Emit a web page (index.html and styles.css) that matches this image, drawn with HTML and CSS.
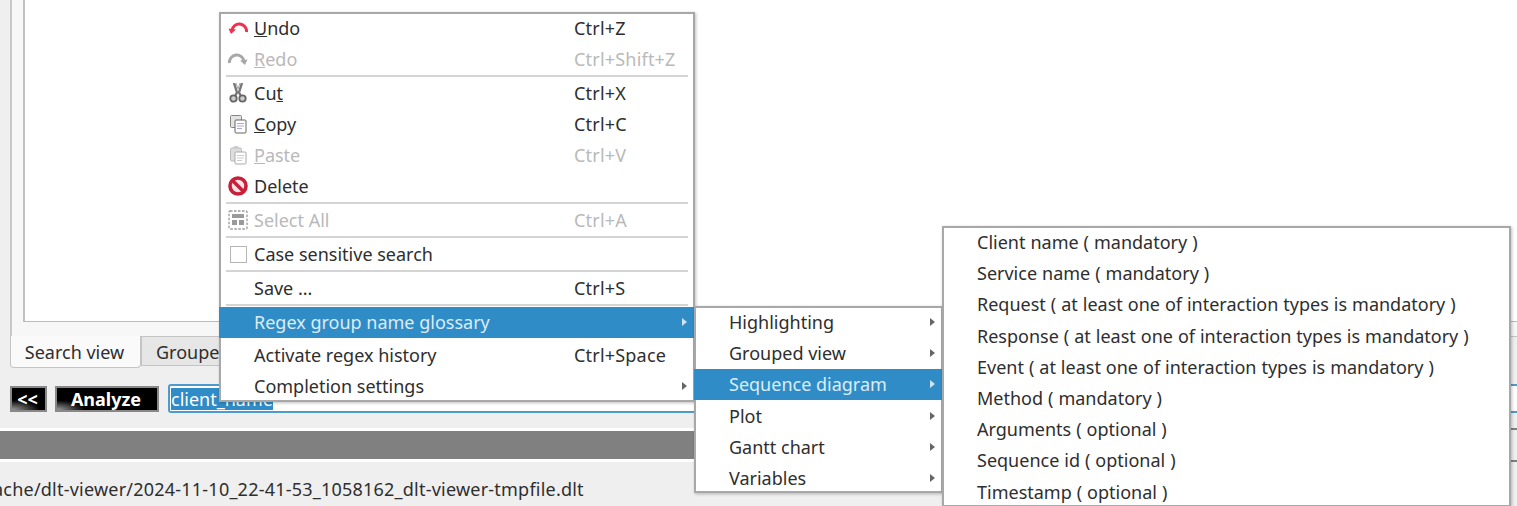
FILE: index.html
```html
<!DOCTYPE html>
<html lang="en">
<head>
    <meta charset="UTF-8">
    <title>DLT Viewer search</title>
    <link rel="stylesheet" href="styles.css">
</head>
<body>

<div class="app">
    <div class="pane">
        <div class="results"></div>
    </div>

    <div class="tabs">
        <div class="tab tab-active">Search view</div>
        <div class="tab">Grouped view</div>
    </div>

    <div class="search-row">
        <button class="btn btn-small">&lt;&lt;</button>
        <button class="btn btn-wide">Analyze</button>
        <div class="search-input"><span class="selected">client_name</span></div>
    </div>

    <div class="progress">
        <div class="progress-chunk"></div>
        <div class="progress-rest"></div>
    </div>

    <div class="status">ache/dlt-viewer/2024-11-10_22-41-53_1058162_dlt-viewer-tmpfile.dlt</div>
</div>

<div class="menu menu-main">
    <div class="item">
        <svg class="icon" viewBox="0 0 20 20"><path d="M4 12.500A7 7 0 0 1 18.500 14" fill="none" stroke="#f0304f" stroke-width="3"/><path d="M0.500 10.500L8 11.500L3 16Z" fill="#f0304f"/></svg>
        <span class="label"><u>U</u>ndo</span><span class="key">Ctrl+Z</span>
    </div>
    <div class="item disabled">
        <svg class="icon" viewBox="0 0 20 20"><path d="M1.500 14A7 7 0 0 1 16 12.500" fill="none" stroke="#a8a8a8" stroke-width="3"/><path d="M19.500 10.500L12 11.500L17 16Z" fill="#a8a8a8"/></svg>
        <span class="label"><u>R</u>edo</span><span class="key">Ctrl+Shift+Z</span>
    </div>
    <div class="sep"></div>
    <div class="item">
        <svg class="icon" viewBox="0 0 20 20"><path d="M6 0L9 9.500L7 13M14 0L11 9.500L13 13" fill="none" stroke="#777" stroke-width="2.400"/><path d="M8 0L10 6L12 0" fill="none" stroke="#aaa"/><circle cx="5.500" cy="15.500" r="3.200" fill="#ccc" stroke="#666" stroke-width="1.800"/><circle cx="14.500" cy="15.500" r="3.200" fill="#ccc" stroke="#666" stroke-width="1.800"/></svg>
        <span class="label">Cu<u>t</u></span><span class="key">Ctrl+X</span>
    </div>
    <div class="item">
        <svg class="icon" viewBox="0 0 20 20"><rect x="2.500" y="1.500" width="11" height="12" rx="1" fill="#e4e4e4" stroke="#888"/><rect x="7" y="6" width="11" height="13" rx="1" fill="#fff" stroke="#666"/><path d="M9 9.500H16M9 12H16M9 14.500H14" stroke="#a9a6e0"/></svg>
        <span class="label"><u>C</u>opy</span><span class="key">Ctrl+C</span>
    </div>
    <div class="item disabled">
        <svg class="icon" viewBox="0 0 20 20"><rect x="2.500" y="3" width="11" height="13" rx="1.500" fill="#ddd" stroke="#bbb"/><rect x="5.500" y="1" width="5" height="3" rx="1" fill="#ccc"/><rect x="7" y="7" width="11" height="12" rx="1" fill="#fff" stroke="#aaa"/><path d="M9 10.500H16M9 13H16M9 15.500H14" stroke="#ccc"/></svg>
        <span class="label"><u>P</u>aste</span><span class="key">Ctrl+V</span>
    </div>
    <div class="item">
        <svg class="icon" viewBox="0 0 20 20"><circle cx="10" cy="10" r="8" fill="#f6e4e6" stroke="#c8203a" stroke-width="3.600"/><path d="M4.500 4.500L15.500 15.500" stroke="#c8203a" stroke-width="3.400"/></svg>
        <span class="label">Delete</span>
    </div>
    <div class="sep"></div>
    <div class="item disabled">
        <svg class="icon" viewBox="0 0 20 20"><rect x="1" y="1" width="18" height="18" rx="1" fill="none" stroke="#999" stroke-width="1.300" stroke-dasharray="2.500 1.500"/><rect x="4" y="4" width="12" height="4" fill="#9a9a9a"/><rect x="4" y="10" width="5" height="5" fill="#9a9a9a"/><rect x="11" y="10" width="5" height="5" fill="#9a9a9a"/></svg>
        <span class="label">Select All</span><span class="key">Ctrl+A</span>
    </div>
    <div class="sep"></div>
    <div class="item">
        <span class="icon check"></span>
        <span class="label">Case sensitive search</span>
    </div>
    <div class="sep"></div>
    <div class="item">
        <span class="icon"></span>
        <span class="label">Save ...</span><span class="key">Ctrl+S</span>
    </div>
    <div class="sep"></div>
    <div class="item active">
        <span class="icon"></span>
        <span class="label">Regex group name glossary</span><span class="arrow"></span>
    </div>
    <div class="gap"></div>
    <div class="item">
        <span class="icon"></span>
        <span class="label">Activate regex history</span><span class="key">Ctrl+Space</span>
    </div>
    <div class="item">
        <span class="icon"></span>
        <span class="label">Completion settings</span><span class="arrow"></span>
    </div>
</div>

<div class="menu menu-second">
    <div class="item"><span class="label">Highlighting</span><span class="arrow"></span></div>
    <div class="item"><span class="label">Grouped view</span><span class="arrow"></span></div>
    <div class="item active"><span class="label">Sequence diagram</span><span class="arrow"></span></div>
    <div class="item"><span class="label">Plot</span><span class="arrow"></span></div>
    <div class="item"><span class="label">Gantt chart</span><span class="arrow"></span></div>
    <div class="item"><span class="label">Variables</span><span class="arrow"></span></div>
</div>

<div class="menu menu-third">
    <div class="item"><span class="label">Client name ( mandatory )</span></div>
    <div class="item"><span class="label">Service name ( mandatory )</span></div>
    <div class="item"><span class="label">Request ( at least one of interaction types is mandatory )</span></div>
    <div class="item"><span class="label">Response ( at least one of interaction types is mandatory )</span></div>
    <div class="item"><span class="label">Event ( at least one of interaction types is mandatory )</span></div>
    <div class="item"><span class="label">Method ( mandatory )</span></div>
    <div class="item"><span class="label">Arguments ( optional )</span></div>
    <div class="item"><span class="label">Sequence id ( optional )</span></div>
    <div class="item"><span class="label">Timestamp ( optional )</span></div>
</div>

</body>
</html>
```

FILE: styles.css
```css
html, body {
    margin: 0;
    height: 506px;
    overflow: hidden;
}

body {
    font-family: "Noto Sans", sans-serif;
    font-size: 18px;
    color: #2e2e2e;
    background-color: #efefef;
    position: relative;
}

.app {
    height: 506px;
    padding-left: 10px;
    box-sizing: border-box;
}

.pane {
    height: 337px;
    padding: 0 0 14px 11px;
    box-sizing: border-box;
    background-color: #f7f7f7;
    border-left: 2px solid #c8c8c8;
    border-bottom: 1px solid #c4c4c4;
}

.results {
    height: 100%;
    background-color: #fff;
    border-left: 2px solid #c0c0c0;
    border-bottom: 1px solid #bbb;
    box-sizing: border-box;
}

.tabs {
    display: flex;
    height: 32px;
    align-items: flex-start;
    margin-top: -1px;
}

.tab {
    height: 30px;
    line-height: 30px;
    padding: 0 14px;
    background-color: #e6e6e6;
    border: 1px solid #c4c4c4;
    box-sizing: border-box;
}

.tab-active {
    width: 131px;
    height: 32px;
    line-height: 32px;
    padding: 0 2px 0 0;
    text-align: center;
    background-color: #fafafa;
    border-top: none;
    border-radius: 0 0 4px 4px;
}

.search-row {
    display: flex;
    align-items: center;
    margin-top: 16px;
    height: 29px;
}

.btn {
    height: 26px;
    padding: 0 2px 0 0;
    font-family: "Noto Sans", sans-serif;
    font-size: 18px;
    line-height: 20px;
    font-weight: bold;
    color: #fff;
    background: radial-gradient(ellipse 40px 14px at 0 100%, #9a9a9a, #000 70%);
    border: 2px solid #888;
}

.btn-small {
    width: 37px;
    margin-right: 8px;
}

.btn-wide {
    width: 104px;
    margin-right: 9px;
}

.search-input {
    flex: 1;
    display: flex;
    align-items: center;
    height: 29px;
    padding-left: 1px;
    box-sizing: border-box;
    background-color: #fff;
    border: 2px solid #4d9bce;
    border-radius: 3px;
    margin-right: -10px;
}

.selected {
    height: 22px;
    line-height: 22px;
    color: #fff;
    background-color: #308cc6;
}

.progress {
    display: flex;
    height: 34px;
    margin: 15px 0 0 -10px;
}

.progress-chunk {
    flex: 1;
    background-color: #808080;
    border-top: 3px solid #fff;
    border-bottom: 3px solid #fff;
}

.progress-rest {
    width: 7px;
    border-top: 2px solid #808080;
    border-bottom: 2px solid #808080;
}

.status {
    margin: 15px 0 0 -17px;
    white-space: nowrap;
    letter-spacing: 0.22px;
}

/* popup menus */
.menu {
    position: absolute;
    background-color: #fff;
    border: 2px solid #a8a8a8;
    box-sizing: border-box;
    box-shadow: 1px 1px 3px rgba(0, 0, 0, 0.25);
}

.menu-main {
    left: 219px;
    top: 12px;
    width: 476px;
    height: 390px;
}

.menu-second {
    left: 694px;
    top: 306px;
    width: 249px;
    height: 187px;
}

.menu-third {
    left: 942px;
    top: 226px;
    width: 569px;
    height: 281px;
    word-spacing: 0.3px;
}

.menu-second .item, .menu-third .item {
    height: 31.2px;
    padding-left: 33px;
}

.item {
    display: flex;
    align-items: center;
    height: 31px;
    padding-left: 7px;
    position: relative;
}

.item:first-child {
    margin-top: -1.5px;
}

.icon {
    width: 20px;
    height: 20px;
    margin-right: 6px;
    flex: none;
    box-sizing: border-box;
}

.check {
    width: 17px;
    height: 17px;
    margin: 0 7px 0 2px;
    border: 1px solid #b5b5b5;
    background-color: #fff;
}

.label {
    flex: 1;
}

.key {
    position: absolute;
    left: 353px;
    letter-spacing: 0.2px;
}

.disabled {
    color: #b9b9b9;
}

.active {
    margin: 0 -2px;
    padding-left: 9px;
    color: #dcecf6;
    background-color: #308cc6;
}

.menu-second .active, .menu-third .active {
    padding-left: 35px;
}

.arrow {
    width: 0;
    height: 0;
    margin-right: 6px;
    border-left: 5px solid #666;
    border-top: 4px solid transparent;
    border-bottom: 4px solid transparent;
}

.active .arrow {
    margin-right: 8px;
    border-left-color: #cfe3f1;
}

.sep {
    height: 2px;
    margin: 0 5px 1px;
    background-color: #d4d4d4;
}

.gap {
    height: 2px;
}
```
